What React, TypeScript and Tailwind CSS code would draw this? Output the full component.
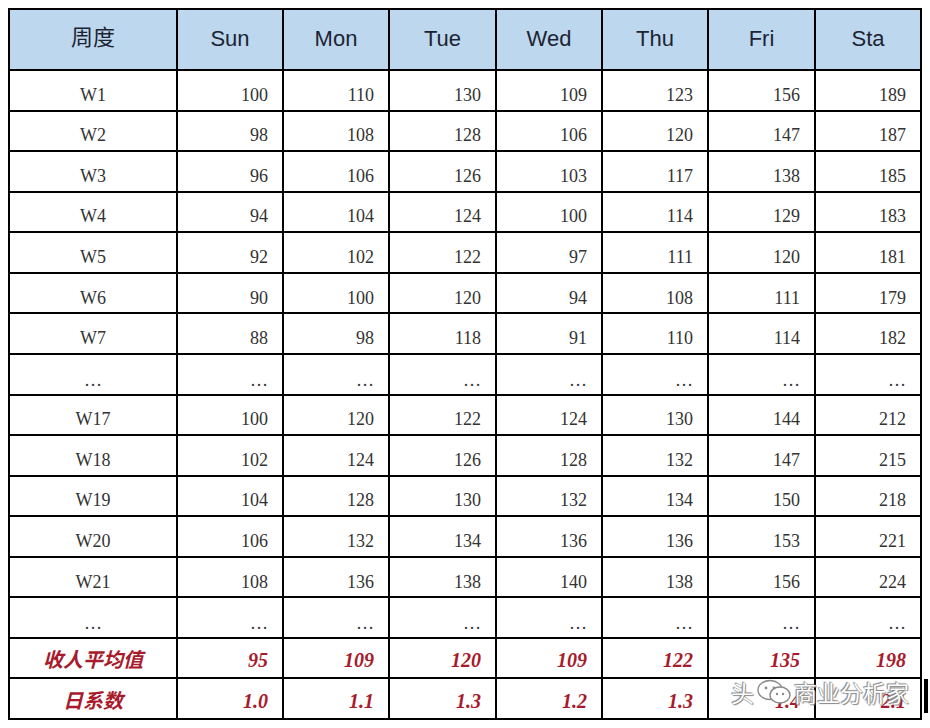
import React from "react";

type Row = { label: string; values: string[]; summary?: boolean };

const days = ["Sun", "Mon", "Tue", "Wed", "Thu", "Fri", "Sta"];
const dots = Array(7).fill("…");

const rows: Row[] = [
  { label: "W1", values: ["100", "110", "130", "109", "123", "156", "189"] },
  { label: "W2", values: ["98", "108", "128", "106", "120", "147", "187"] },
  { label: "W3", values: ["96", "106", "126", "103", "117", "138", "185"] },
  { label: "W4", values: ["94", "104", "124", "100", "114", "129", "183"] },
  { label: "W5", values: ["92", "102", "122", "97", "111", "120", "181"] },
  { label: "W6", values: ["90", "100", "120", "94", "108", "111", "179"] },
  { label: "W7", values: ["88", "98", "118", "91", "110", "114", "182"] },
  { label: "…", values: dots },
  { label: "W17", values: ["100", "120", "122", "124", "130", "144", "212"] },
  { label: "W18", values: ["102", "124", "126", "128", "132", "147", "215"] },
  { label: "W19", values: ["104", "128", "130", "132", "134", "150", "218"] },
  { label: "W20", values: ["106", "132", "134", "136", "136", "153", "221"] },
  { label: "W21", values: ["108", "136", "138", "140", "138", "156", "224"] },
  { label: "…", values: dots },
  { label: "收人平均值", values: ["95", "109", "120", "109", "122", "135", "198"], summary: true },
  { label: "日系数", values: ["1.0", "1.1", "1.3", "1.2", "1.3", "1.4", "2.1"], summary: true },
];

const serif = "font-['Liberation_Serif','Noto_Sans_CJK_SC',serif]";

const WeChatMark = () => (
  <svg width="36" height="28" viewBox="0 0 36 28" className="mx-[2px]">
    <ellipse cx="14" cy="12" rx="12" ry="9.5" fill="white" stroke="#8a8a8a" strokeWidth="1.4" />
    <ellipse cx="24" cy="17" rx="10" ry="8" fill="white" stroke="#8a8a8a" strokeWidth="1.4" />
    <circle cx="10" cy="10" r="1.4" fill="#8a8a8a" />
    <circle cx="18" cy="10" r="1.4" fill="#8a8a8a" />
    <circle cx="21" cy="16" r="1.2" fill="#8a8a8a" />
    <circle cx="27" cy="16" r="1.2" fill="#8a8a8a" />
  </svg>
);

export default function App() {
  return (
    <div className="relative w-[930px] h-[728px] bg-white overflow-hidden">
      <div className="ml-[8px] mt-[8px] w-[914px] h-[712px] bg-black p-[2px] grid gap-[2px] grid-cols-[166px_104px_104px_105px_104px_104px_105px_104px] grid-rows-[59px_repeat(16,minmax(0,1fr))]">
        {/* Header */}
        <div className="bg-[#bdd7ee] flex items-center justify-center pb-[4px] text-[22px] text-[#1c2433] font-['Liberation_Sans','Noto_Sans_CJK_SC',sans-serif]">
          周度
        </div>
        {days.map((d) => (
          <div
            key={d}
            className="bg-[#bdd7ee] flex items-center justify-center pb-[3px] text-[22px] text-[#1c2433] font-['Liberation_Sans',sans-serif]"
          >
            {d}
          </div>
        ))}

        {/* Body */}
        {rows.map((r, i) => {
          const isDots = r.label === "…";
          const pad = isDots ? "pt-[12px]" : "pt-[10px]";
          return (
            <React.Fragment key={i}>
              {r.summary ? (
                <div className="bg-white flex items-center justify-center pt-[2px] text-[20px] font-bold italic text-[#a81a2c] font-['Noto_Sans_CJK_SC',serif]">
                  {r.label}
                </div>
              ) : (
                <div className={`bg-white flex items-center justify-center ${pad} text-[18px] text-[#333] ${serif}`}>
                  {r.label}
                </div>
              )}
              {r.values.map((v, j) =>
                r.summary ? (
                  <div
                    key={j}
                    className="bg-white flex items-center justify-end pr-[14px] pt-[4px] text-[20px] font-bold italic text-[#a81a2c] font-['Liberation_Serif',serif]"
                  >
                    {v}
                  </div>
                ) : (
                  <div
                    key={j}
                    className={`bg-white flex items-center justify-end pr-[14px] ${pad} text-[18px] text-[#333] ${serif}`}
                  >
                    {v}
                  </div>
                )
              )}
            </React.Fragment>
          );
        })}
      </div>

      {/* Watermark */}
      <div className="absolute left-[731px] top-[675px] flex items-center text-[23px] text-white font-['Noto_Sans_CJK_SC',sans-serif] [text-shadow:0_0_1px_#777,1px_1px_1px_#888,-1px_-1px_1px_#888]">
        <span>头</span>
        <WeChatMark />
        <span>商业分析家</span>
      </div>
      <div className="absolute left-[924px] top-[679px] w-[4px] h-[34px] bg-black" />
    </div>
  );
}
